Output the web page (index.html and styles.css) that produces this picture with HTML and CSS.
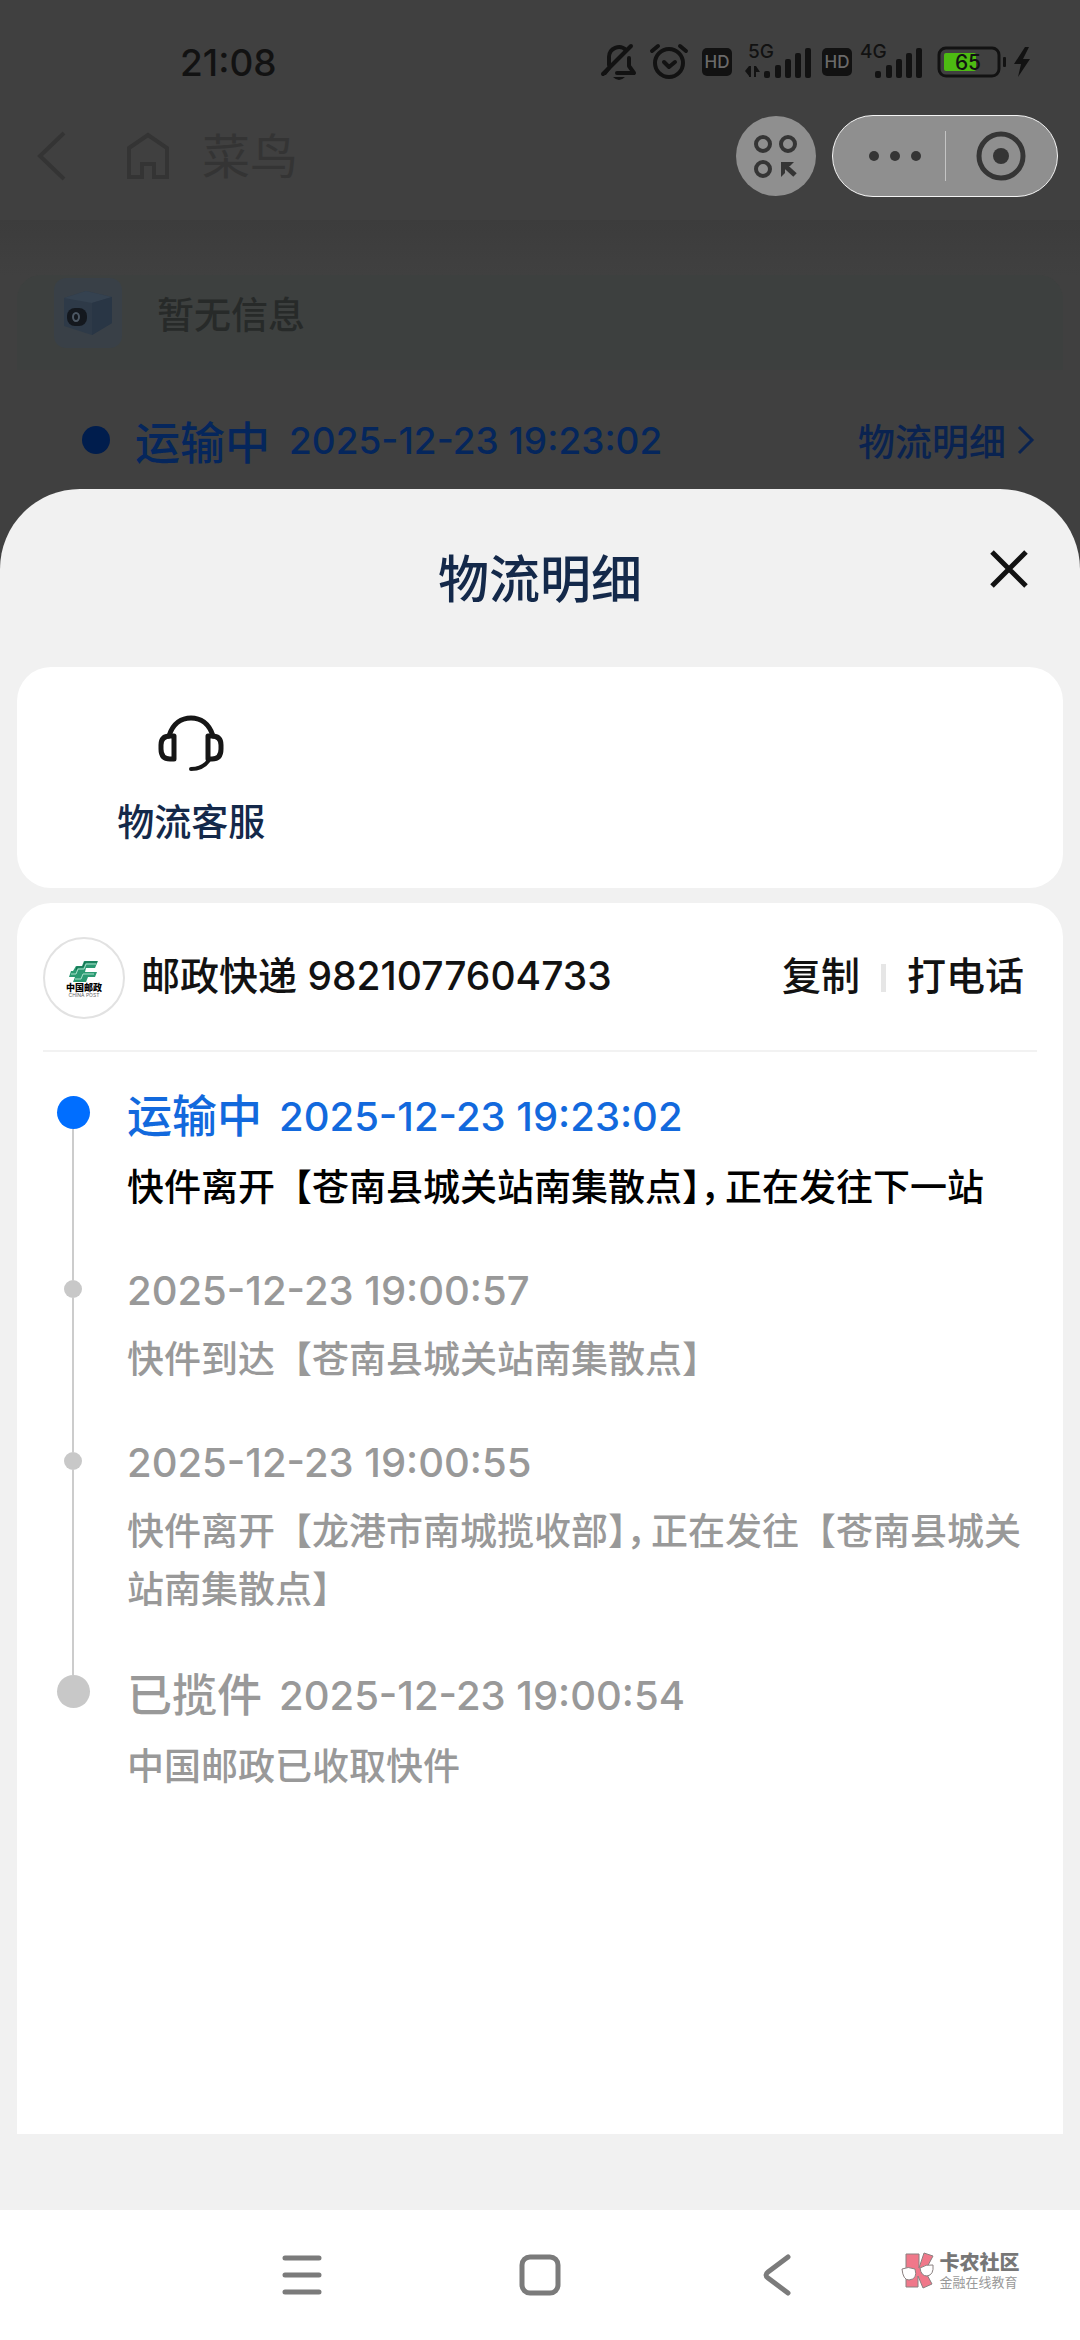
FILE: index.html
```html
<!DOCTYPE html>
<html lang="zh-CN">
<head>
<meta charset="utf-8">
<meta name="viewport" content="width=device-width, initial-scale=1">
<title>物流明细</title>
<link rel="stylesheet" href="styles.css">
</head>
<body>
<div class="backdrop">
  <div class="status">
    <time class="clock">21:08</time>
    <div class="status-icons">
      <svg width="41" height="40" viewBox="0 0 41 40" fill="none" stroke="#121212" stroke-width="4" stroke-linecap="round" stroke-linejoin="round">
        <path d="M9 23V15a10 10 0 0 1 17-7M29 16v8l5 7H17M5 31l4-5"/>
        <path d="M3 32L31 4"/><path d="M13 35h12q-6 6-12 0z" fill="#121212" stroke="none"/>
      </svg>
      <svg width="45" height="40" viewBox="0 0 45 40" fill="none" stroke="#121212" stroke-width="4" stroke-linecap="round" stroke-linejoin="round">
        <circle cx="20" cy="21" r="14"/><path d="M15 20l5 5 6-5M3 9l6-5M37 9l-6-5"/>
      </svg>
      <svg width="35" height="40" viewBox="0 0 35 40">
        <rect y="6" width="30" height="28" rx="5" fill="#121212"/>
        <text x="15" y="26" class="hd">HD</text>
      </svg>
      <svg width="69" height="40" viewBox="0 0 69 40" fill="#121212">
        <text x="3" y="16" class="net">5G</text>
        <path d="M4 24v10l-4-5zM4 24h2v11H4zM9 24h2v11H9zM11 24l4 6h-4z"/>
        <rect x="19" y="29" width="6" height="7" rx="2"/><rect x="30" y="23" width="6" height="13" rx="2"/><rect x="40" y="17" width="6" height="19" rx="2"/><rect x="50" y="11" width="6" height="25" rx="2"/><rect x="60" y="6" width="6" height="30" rx="2"/>
      </svg>
      <svg width="30" height="40" viewBox="0 0 30 40">
        <rect y="6" width="30" height="28" rx="5" fill="#121212"/>
        <text x="15" y="26" class="hd">HD</text>
      </svg>
      <svg width="69" height="40" viewBox="0 0 69 40" fill="#121212">
        <text x="0" y="16" class="net">4G</text>
        <rect x="15" y="29" width="6" height="7" rx="2"/><rect x="26" y="23" width="6" height="13" rx="2"/><rect x="36" y="17" width="6" height="19" rx="2"/><rect x="46" y="11" width="6" height="25" rx="2"/><rect x="56" y="6" width="6" height="30" rx="2"/>
      </svg>
      <svg width="94" height="40" viewBox="0 0 94 40">
        <rect x="2" y="6" width="60" height="28" rx="7" fill="none" stroke="#121212" stroke-width="3"/>
        <rect x="7" y="11" width="32" height="18" rx="2" fill="#4dbb12"/>
        <text x="31" y="28" class="level">65</text>
        <rect x="66" y="15" width="3" height="10" rx="1" fill="#121212"/>
        <path d="M88 5L77 22h7l-3 13 12-18h-7l6-12z" fill="#121212"/>
      </svg>
    </div>
  </div>

  <header class="topbar">
    <button class="plain" aria-label="返回"><svg width="30" height="50" viewBox="0 0 30 50" fill="none" stroke="#343434" stroke-width="4"><path d="M28 2L4 25l24 23"/></svg></button>
    <button class="plain" aria-label="首页"><svg width="44" height="50" viewBox="0 0 44 50" fill="none" stroke="#343434" stroke-width="4"><path d="M3 17L22 4l19 13v29H28V33H16v13H3z"/></svg></button>
    <span class="app-name">菜鸟</span>
    <button class="grid-btn" aria-label="小程序"><svg width="80" height="80" viewBox="0 0 80 80" fill="none" stroke="#353535" stroke-width="4"><circle cx="27" cy="28" r="7"/><circle cx="52" cy="28" r="7"/><circle cx="27" cy="53" r="7"/><path d="M59 59L47 48" stroke-width="5"/><path d="M45 61V46h13l-4 4h-5v7z" fill="#353535" stroke="none"/></svg></button>
    <div class="capsule">
      <button class="plain" aria-label="更多"><svg width="54" height="12" viewBox="0 0 54 12" fill="#353535"><circle cx="12" cy="6" r="5"/><circle cx="33" cy="6" r="5"/><circle cx="54" cy="6" r="5"/></svg></button>
      <button class="plain" aria-label="关闭小程序"><svg width="50" height="50" viewBox="0 0 50 50" fill="none" stroke="#353535" stroke-width="5"><circle cx="25" cy="25" r="22"/><circle cx="25" cy="25" r="8" fill="#353535" stroke="none"/></svg></button>
    </div>
  </header>

  <main class="page">
    <div class="notice">
      <svg width="68" height="70" viewBox="0 0 68 70">
        <rect width="68" height="70" rx="12" fill="#394047"/>
        <path d="M10 20L32 13l26 6v26L38 57 10 48z" fill="#2e3a48"/><path d="M10 20L32 13l26 6-20 6z" fill="#354250"/><path d="M38 25l20-6v26L38 57z" fill="#293645"/>
        <rect x="13" y="30" width="20" height="18" rx="8" fill="#14181e"/><ellipse cx="22" cy="39" rx="3" ry="4" fill="none" stroke="#4c5763" stroke-width="2"/>
      </svg>
      <span>暂无信息</span>
    </div>
    <div class="summary">
      <i class="summary-dot"></i>
      <strong class="state">运输中</strong>
      <time class="summary-time">2025-12-23 19:23:02</time>
      <a class="more" href="#detail">物流明细<svg width="20" height="30" viewBox="0 0 20 30" fill="none" stroke="#0a2350" stroke-width="3"><path d="M3 2l13 13L3 28"/></svg></a>
    </div>
  </main>
</div>

<section class="sheet" id="detail">
  <div class="sheet-head">
    <h1>物流明细</h1>
    <button class="plain close" aria-label="关闭"><svg width="40" height="40" viewBox="0 0 40 40" stroke="#121212" stroke-width="5"><path d="M3 3l34 34M37 3L3 37"/></svg></button>
  </div>

  <div class="card services">
    <button class="plain service">
      <svg width="72" height="60" viewBox="0 0 72 60" fill="none" stroke="#161616" stroke-width="5" stroke-linecap="round" stroke-linejoin="round">
        <path d="M14 22C18 9 27 4 36 4s18 5 22 18"/>
        <path d="M19 22v23h-4q-9 0-9-10v-4q0-9 9-9zM53 22v23h4q9 0 9-10v-4q0-9-9-9z"/>
        <path d="M54 46q-6 9-18 9" stroke-width="4"/>
      </svg>
      <span>物流客服</span>
    </button>
  </div>

  <div class="card detail">
    <div class="carrier">
      <svg class="carrier-logo" width="82" height="82" viewBox="0 0 82 82">
        <circle cx="41" cy="41" r="40" fill="#fff" stroke="#e2e2e2" stroke-width="2"/>
        <path d="M55 24H41l-2 5h-6l-3 5h-2l-2 6h6l-2 5h13l2-5h7l2-5H42l1-4h9z" fill="#2b9a72"/>
        <path d="M53 27H43l-2 5h-6l-2 5h-5M51 37H40l-2 5h-6" fill="none" stroke="#a9e0ca" stroke-width="1"/>
        <path d="M54 25H42l-2 5h-6l-1 3" fill="none" stroke="#0f6b4a" stroke-width="1"/>
        <text x="41" y="54" class="logo-cn">中国邮政</text>
        <text x="41" y="60" class="logo-en">CHINA POST</text>
      </svg>
      <span class="number">邮政快递 9821077604733</span>
      <button class="plain action">复制</button>
      <i class="split"></i>
      <button class="plain action">打电话</button>
    </div>

    <ol class="timeline">
      <li class="stop stop-major current">
        <div class="rail"><i></i></div>
        <div class="body">
          <div class="line"><strong class="state">运输中</strong><time>2025-12-23 19:23:02</time></div>
          <p>快件离开【苍南县城关站南集散点】<span class="half">，</span>正在发往下一站</p>
        </div>
      </li>
      <li class="stop">
        <div class="rail"><i></i></div>
        <div class="body">
          <div class="line"><time>2025-12-23 19:00:57</time></div>
          <p>快件到达【苍南县城关站南集散点】</p>
        </div>
      </li>
      <li class="stop">
        <div class="rail"><i></i></div>
        <div class="body">
          <div class="line"><time>2025-12-23 19:00:55</time></div>
          <p>快件离开【龙港市南城揽收部】<span class="half">，</span>正在发往【苍南县城关站南集散点】</p>
        </div>
      </li>
      <li class="stop stop-major">
        <div class="rail"><i></i></div>
        <div class="body">
          <div class="line"><strong class="state">已揽件</strong><time>2025-12-23 19:00:54</time></div>
          <p>中国邮政已收取快件</p>
        </div>
      </li>
    </ol>
  </div>
</section>

<nav class="sysnav">
  <button class="plain" aria-label="最近任务"><svg width="42" height="42" viewBox="0 0 42 42" stroke="#7b7b7b" stroke-width="5" stroke-linecap="round"><path d="M4 4h34M4 21h34M4 38h34"/></svg></button>
  <button class="plain" aria-label="主屏幕"><svg width="42" height="42" viewBox="0 0 42 42" fill="none" stroke="#7b7b7b" stroke-width="5"><rect x="3" y="3" width="36" height="36" rx="8"/></svg></button>
  <button class="plain" aria-label="后退"><svg width="42" height="42" viewBox="0 0 42 42" fill="none" stroke="#7b7b7b" stroke-width="5" stroke-linecap="round"><path d="M31 3L11 18q-4 3 0 6l20 15"/></svg></button>
  <div class="brand">
    <svg width="36" height="38" viewBox="0 0 36 38" stroke="#8a8080" stroke-width="1" stroke-linejoin="round">
      <path d="M6 2h13v14L24 1l9 3-8 15 7 13-9 4-5-12v11H6z" fill="#f0788a"/>
      <path d="M2 17q6-3 13 0 3 10-6 11-6 0-7-11zM20 16q6-4 13-3 1 10-6 11-6 0-7-8z" fill="#fff"/>
    </svg>
    <div><b>卡农社区</b><small>金融在线教育</small></div>
  </div>
</nav>
</body>
</html>
```
FILE: styles.css
```css
* { box-sizing: border-box; }
body {
  margin: 0;
  min-height: 100vh;
  display: flex;
  flex-direction: column;
  background: #404040;
  color: #121212;
  font-family: Inter, "Noto Sans CJK SC", sans-serif;
  font-size: 37px;
  font-weight: 500;
}
svg { display: block; flex: none; overflow: visible; }
i { display: block; flex: none; }
p, h1, ol { margin: 0; padding: 0; }
.plain {
  padding: 0;
  border: 0;
  background: none;
  color: inherit;
  font: inherit;
  flex: none;
}

/* dimmed page behind the sheet */
.status {
  display: flex;
  justify-content: space-between;
  align-items: center;
  padding: 40px 49px 0 180px;
  height: 84px;
}
.clock { font-size: 37px; }
.status-icons { display: flex; align-items: center; gap: 8px; }
.status-icons text { font-family: Inter, sans-serif; font-weight: 500; }
.hd { font-size: 17px; fill: #6a6a6a; text-anchor: middle; }
.net { font-size: 19px; fill: #121212; }
.level { font-size: 21px; fill: #121212; text-anchor: middle; }
.topbar {
  display: flex;
  align-items: center;
  height: 136px;
  padding: 8px 22px 0 36px;
}
.app-name {
  margin: 0 auto 0 32px;
  padding-bottom: 6px;
  font-size: 48px;
  font-weight: 400;
  color: #343434;
}
.topbar > .plain + .plain { margin-left: 60px; }
.grid-btn {
  width: 80px;
  height: 80px;
  padding: 0;
  border: 0;
  border-radius: 50%;
  background: #8f8f8f;
}
.capsule {
  display: flex;
  align-items: center;
  width: 226px;
  height: 82px;
  margin-left: 16px;
  border: 1px solid #f4f4f4;
  border-radius: 41px;
  background: #8f8f8f;
}
.capsule button { flex: 1; display: flex; justify-content: center; }
.capsule button + button { border-left: 1px solid #c4c4c4; }
.page {
  margin-bottom: -21px;
  padding: 55px 17px 0;
  background: linear-gradient(#3c3c3c, #404040 55px);
}
.notice {
  display: flex;
  align-items: center;
  gap: 35px;
  height: 95px;
  padding: 0 37px 20px;
  border-radius: 24px 24px 0 0;
  background: #3d403f;
  color: #272a29;
}
.summary {
  display: flex;
  align-items: center;
  height: 140px;
  padding: 0 27px 0 65px;
  color: #05265c;
}
.summary-dot {
  width: 28px;
  height: 28px;
  margin-right: 25px;
  border-radius: 50%;
  background: #001d4d;
}
.state { font-size: 45px; font-weight: 500; }
.summary-time { margin-left: 19px; font-size: 37px; }
.more {
  display: flex;
  align-items: center;
  gap: 10px;
  margin-left: auto;
  color: #0a2350;
  text-decoration: none;
}

/* bottom sheet */
.sheet {
  flex: 1;
  display: flex;
  flex-direction: column;
  gap: 15px;
  padding: 0 17px 76px;
  border-radius: 80px 80px 0 0;
  background: #f1f1f1;
}
.sheet-head {
  display: grid;
  grid-template-columns: 1fr auto 1fr;
  padding: 60px 34px 41px;
}
.sheet-head h1 {
  grid-column: 2;
  font-size: 51px;
  line-height: 62px;
  font-weight: 500;
  color: #14294a;
}
.close { justify-self: end; align-self: start; }
.card { border-radius: 34px; background: #fff; }
.services {
  display: grid;
  grid-template-columns: repeat(3, 1fr);
  padding: 47px 0 36px;
}
.service {
  display: flex;
  flex-direction: column;
  align-items: center;
  gap: 20px;
  line-height: 58px;
  color: #14294a;
}
.detail {
  flex: 1;
  padding: 34px 26px 0;
  border-radius: 34px 34px 0 0;
}
.carrier {
  display: flex;
  align-items: flex-start;
  padding: 0 13px 31px 0;
  border-bottom: 2px solid #f2f2f2;
  font-size: 39px;
  line-height: 77px;
}
.number { margin: 0 auto 0 16px; }
.split { align-self: center; width: 5px; height: 28px; margin: 0 21px; background: #e6e6e6; }
.logo-cn { font: 900 9px "Noto Sans CJK SC", sans-serif; text-anchor: middle; }
.logo-en { font: 400 5px Inter, sans-serif; text-anchor: middle; fill: #666; }

.timeline { padding-top: 34px; list-style: none; }
.stop { display: flex; gap: 24px; color: #999; }
.rail { display: flex; flex-direction: column; align-items: center; width: 60px; flex: none; }
.rail::before, .rail::after { content: ""; width: 2px; background: #ccc; }
.rail::before { height: 17px; }
.rail::after { flex: 1; }
.rail i { width: 18px; height: 18px; border-radius: 50%; background: #c8c8c8; }
.stop-major .rail::before { height: 10px; }
.stop-major .rail i { width: 33px; height: 33px; }
.stop:first-child .rail::before, .stop:last-child .rail::after { background: none; }
.body { flex: 1; padding-bottom: 46px; }
.line {
  display: flex;
  align-items: center;
  gap: 17px;
  margin-bottom: 12px;
  font-size: 40px;
  line-height: 56px;
}
.stop-major .line { line-height: 61px; }
.body p { line-height: 58px; }
.half { margin-right: 6px; font-feature-settings: "halt"; }
.current .rail i { background: #006eff; }
.current .line { color: #1269dd; }
.current p { color: #000; }

/* system navigation */
.sysnav {
  display: grid;
  grid-template-columns: repeat(3, 22fr) 17fr;
  align-items: center;
  justify-items: center;
  height: 130px;
  padding-left: 17%;
  background: #fff;
}
.brand {
  display: flex;
  align-items: center;
  justify-self: start;
  gap: 3px;
  padding: 0 0 8px 4px;
  color: #777;
}
.brand b, .brand small { display: block; }
.brand b { font-size: 20px; line-height: 22px; font-weight: 900; }
.brand small { font-size: 13px; line-height: 16px; font-weight: 400; color: #999; }
```
